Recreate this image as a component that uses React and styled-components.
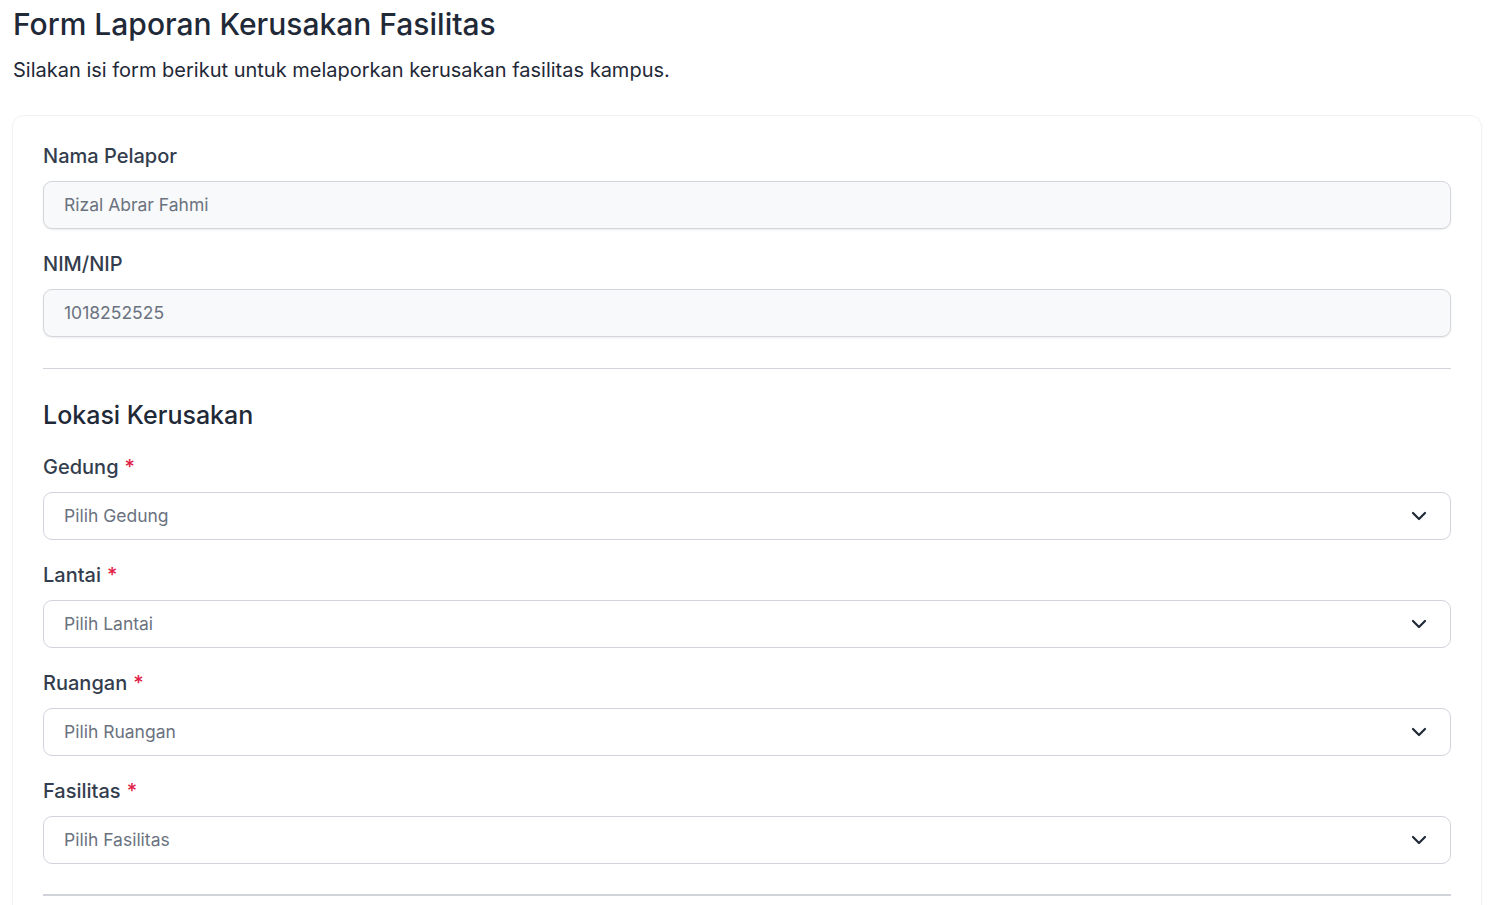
import styled, { createGlobalStyle } from 'styled-components'

const GlobalStyle = createGlobalStyle`
  body {
    margin: 0;
    background: #ffffff;
    font-family: Inter, "Noto Sans", sans-serif;
    color: #1f2937;
  }
`

const Page = styled.div`
  padding: 6px 9px 0 12px;
`

const Title = styled.h1`
  margin: 0 0 0 1px;
  font-size: 30px;
  line-height: 36px;
  font-weight: 500;
  color: #1f2937;
`

const Subtitle = styled.p`
  margin: 14px 0 31px 1px;
  font-size: 20px;
  line-height: 28px;
  color: #1f2937;
`

const Card = styled.div`
  background: #fff;
  border: 1px solid #f1f2f4;
  border-radius: 12px;
  box-shadow: 0 1px 3px rgba(0, 0, 0, 0.03);
  padding: 26px 30px 40px;
`

const Field = styled.div`
  display: flex;
  flex-direction: column;
  gap: 11px;
  margin-bottom: 21px;
`

const Label = styled.label`
  font-size: 20px;
  line-height: 28px;
  font-weight: 500;
  color: #333d4d;
`

const Star = styled.span`
  color: #e11d48;
  margin-left: 6px;
`

const Box = styled.div`
  box-sizing: border-box;
  height: 48px;
  display: flex;
  align-items: center;
  justify-content: space-between;
  padding: 0 19px 1px 20px;
  border: 1px solid ${({ filled }) => (filled ? '#d4d6db' : '#d1d5db')};
  border-radius: 9px;
  background: ${({ filled }) => (filled ? '#f8f9fa' : '#ffffff')};
  box-shadow: ${({ filled }) => (filled ? '0 1px 2px rgba(0,0,0,0.08)' : 'none')};
  font-size: 17.5px;
  color: #6b7280;
`

const Divider = styled.hr`
  border: none;
  border-top: ${({ thick }) => (thick ? '2px solid #d1d5db' : '1px solid #d1d5db')};
  margin: ${({ thick }) => (thick ? '30px 0 0' : '31px 0 30px')};
`

const Heading = styled.h2`
  margin: 0 0 22px;
  font-size: 25px;
  line-height: 32px;
  font-weight: 500;
  color: #1f2937;
`

const Chevron = () => (
  <svg width="24" height="24" viewBox="0 0 24 24" fill="none" stroke="#1f2937" strokeWidth="2.2" strokeLinecap="round" strokeLinejoin="round">
    <path d="M6 9l6 6 6-6" />
  </svg>
)

const selects = ['Gedung', 'Lantai', 'Ruangan', 'Fasilitas']

export default function App() {
  return (
    <Page>
      <GlobalStyle />
      <Title>Form Laporan Kerusakan Fasilitas</Title>
      <Subtitle>Silakan isi form berikut untuk melaporkan kerusakan fasilitas kampus.</Subtitle>
      <Card>
        <Field>
          <Label>Nama Pelapor</Label>
          <Box filled>Rizal Abrar Fahmi</Box>
        </Field>
        <Field>
          <Label>NIM/NIP</Label>
          <Box filled>1018252525</Box>
        </Field>
        <Divider />
        <Heading>Lokasi Kerusakan</Heading>
        {selects.map((s) => (
          <Field key={s}>
            <Label>
              {s}
              <Star>*</Star>
            </Label>
            <Box>
              <span>Pilih {s}</span>
              <Chevron />
            </Box>
          </Field>
        ))}
        <Divider thick />
      </Card>
    </Page>
  )
}
